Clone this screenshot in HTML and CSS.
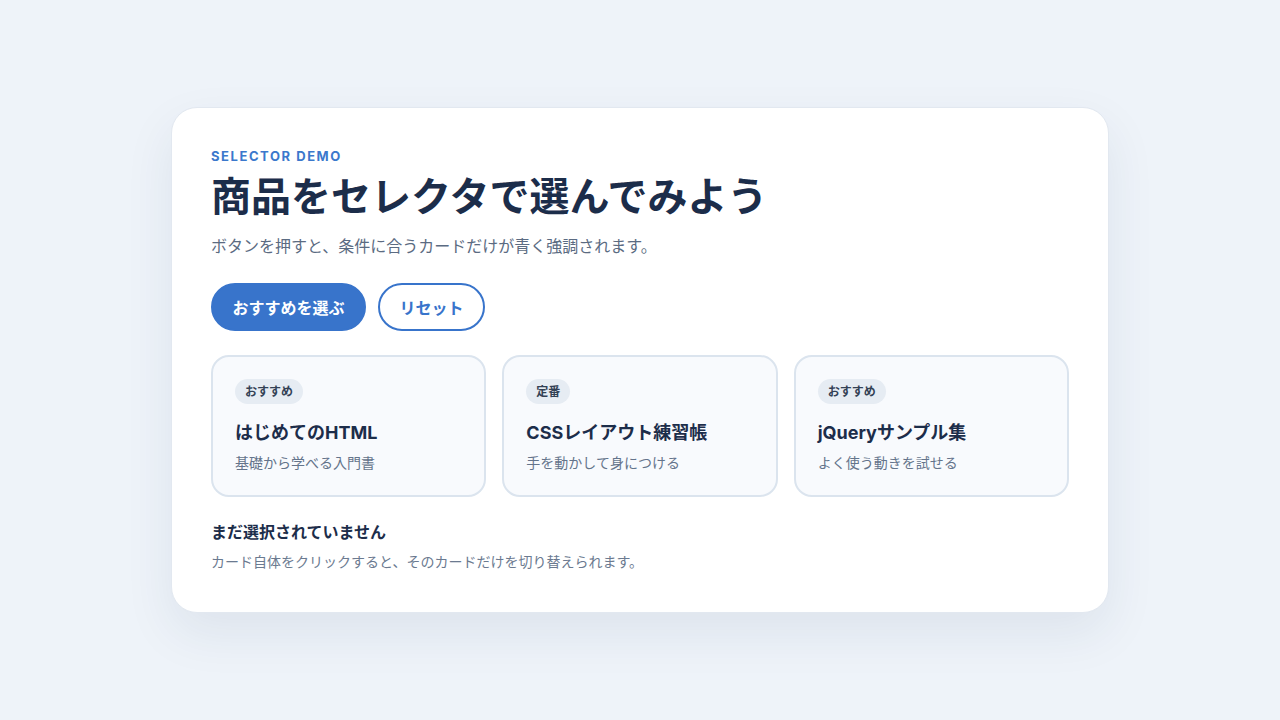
FILE: index.html
```html
<!DOCTYPE html>
<html lang="ja">
<head>
<meta charset="utf-8">
<title>Selector Demo</title>
<link rel="stylesheet" href="styles.css">
</head>
<body>
<main class="panel">
  <p class="eyebrow">SELECTOR DEMO</p>
  <h1 class="title">商品をセレクタで選んでみよう</h1>
  <p class="lead">ボタンを押すと、条件に合うカードだけが青く強調されます。</p>
  <div class="actions">
    <button class="btn btn-primary" type="button">おすすめを選ぶ</button>
    <button class="btn btn-outline" type="button">リセット</button>
  </div>
  <div class="grid">
    <article class="item">
      <span class="badge">おすすめ</span>
      <h2 class="item-title">はじめてのHTML</h2>
      <p class="item-desc">基礎から学べる入門書</p>
    </article>
    <article class="item">
      <span class="badge">定番</span>
      <h2 class="item-title">CSSレイアウト練習帳</h2>
      <p class="item-desc">手を動かして身につける</p>
    </article>
    <article class="item">
      <span class="badge">おすすめ</span>
      <h2 class="item-title">jQueryサンプル集</h2>
      <p class="item-desc">よく使う動きを試せる</p>
    </article>
  </div>
  <p class="status">まだ選択されていません</p>
  <p class="note">カード自体をクリックすると、そのカードだけを切り替えられます。</p>
</main>
</body>
</html>
```

FILE: styles.css
```css
* { box-sizing: border-box; }
html, body { margin: 0; padding: 0; }
body {
  min-height: 100vh;
  background: #eef3f9;
  font-family: "Inter", "Noto Sans CJK JP", sans-serif;
  color: #1c2d4a;
  display: flex;
  align-items: center;
  justify-content: center;
}
.panel {
  width: 938px;
  background: #ffffff;
  border: 1px solid #e2e8f0;
  border-radius: 26px;
  padding: 39px 39px 40px;
  box-shadow: 0 20px 50px rgba(30, 50, 90, 0.08);
}
.eyebrow {
  margin: 0 0 6px;
  font-size: 13px;
  line-height: 18px;
  font-weight: 700;
  letter-spacing: 0.12em;
  color: #3b78cc;
}
.title {
  margin: 0 0 10px;
  font-size: 40px;
  line-height: 52px;
  font-weight: 700;
  color: #1c2d4a;
}
.lead {
  margin: 0 0 24px;
  font-size: 16px;
  line-height: 26px;
  color: #5b6b82;
}
.actions {
  display: flex;
  gap: 12px;
  margin-bottom: 24px;
}
.btn {
  height: 48px;
  padding: 0 19.5px;
  border-radius: 24px;
  border: 2px solid #3874cb;
  font-family: inherit;
  font-size: 16px;
  font-weight: 700;
  cursor: pointer;
}
.btn-primary { background: #3874cb; color: #ffffff; }
.btn-outline { background: #ffffff; color: #3874cb; }
.grid {
  display: grid;
  grid-template-columns: repeat(3, 1fr);
  gap: 16px;
}
.item {
  background: #f8fafd;
  border: 2px solid #dbe4ee;
  border-radius: 18px;
  padding: 22px;
}
.badge {
  display: inline-block;
  height: 25px;
  line-height: 25px;
  padding: 0 10px;
  border-radius: 13px;
  background: #e6ecf3;
  color: #334155;
  font-size: 12px;
  font-weight: 700;
}
.item-title {
  margin: 16px 0 6px;
  font-size: 18px;
  line-height: 26px;
  font-weight: 700;
  color: #1c2d4a;
}
.item-desc {
  margin: 0;
  font-size: 14px;
  line-height: 21px;
  color: #64748b;
}
.status {
  margin: 23px 0 7px;
  font-size: 16px;
  line-height: 24px;
  font-weight: 700;
  color: #1c2d4a;
}
.note {
  margin: 0;
  font-size: 14px;
  line-height: 21px;
  color: #6b7a90;
}
```
